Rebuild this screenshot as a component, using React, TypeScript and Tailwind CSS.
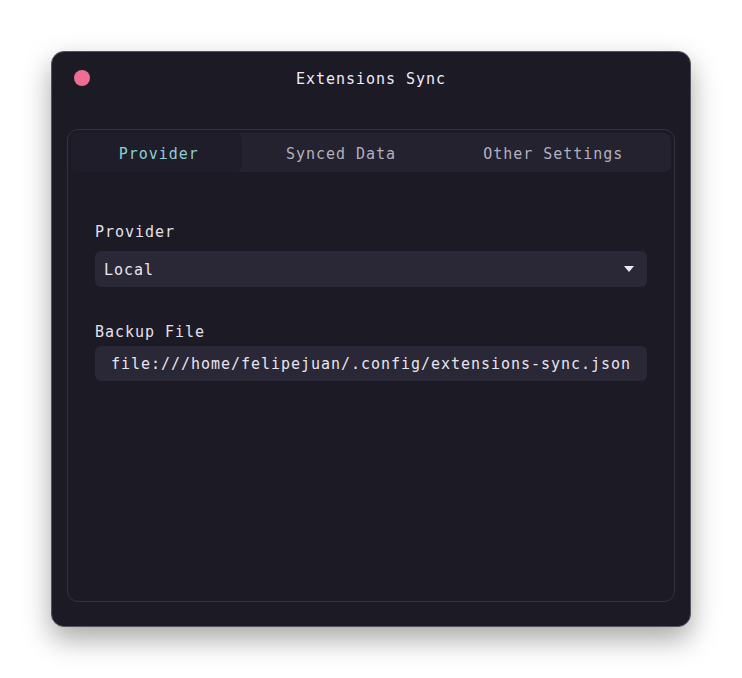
import { useState } from 'react';

const tabs = ['Provider', 'Synced Data', 'Other Settings'];

const mono = "font-['DejaVu_Sans_Mono','Liberation_Mono',monospace] text-[15px] tracking-[0.97px]";

const App = () => {
  const [active, setActive] = useState(0);

  return (
    <div className={`min-h-[678px] w-full bg-white p-[51px] ${mono}`}>
      <div className="flex h-[576px] w-[640px] flex-col rounded-[13px] border border-[#55535f] bg-[#1c1a25] shadow-[0_12px_28px_rgba(0,0,0,0.35)]">
        {/* title bar */}
        <div className="relative flex h-[54px] items-center justify-center">
          <span className="absolute left-[22px] top-[18px] h-4 w-4 rounded-full bg-[#ee6d92]" />
          <span className="text-[#efebf7]">Extensions Sync</span>
        </div>

        <div className="flex flex-1 px-[15px] pb-6 pt-[23px]">
          <div className="flex flex-1 flex-col rounded-[11px] border border-[#34323e] p-[3px]">
            <div className="flex h-[39px] rounded-[7px] bg-[#24222f] px-1">
              {tabs.map((t, i) => (
                <button
                  key={t}
                  onClick={() => setActive(i)}
                  className={`flex flex-auto items-center justify-center pt-[3px] ${
                    active === i ? '-ml-1 rounded-[7px] bg-[#1f1d2a] pl-1 text-[#8ccfd6]' : 'text-[#b3afbf]'
                  }`}
                >
                  {t}
                </button>
              ))}
            </div>

            <div className="flex flex-col px-[24px] pt-[50px]">
              <label className="leading-5 text-[#e4e0ec]">Provider</label>
              <div className="mt-[9px] flex h-9 items-center justify-between rounded-[6px] bg-[#2a2836] pl-[9px] pr-[13px] pt-[2px] text-[#e8e4f0]">
                <span>Local</span>
                <svg width="10" height="6" viewBox="0 0 10 6" className="-mt-[2px]">
                  <path d="M0 0h10L5 6z" fill="#ebe8f5" />
                </svg>
              </div>

              <label className="mt-[35px] leading-5 text-[#e4e0ec]">Backup File</label>
              <div className="mt-[4px] flex h-[35px] items-center justify-center rounded-[6px] bg-[#2a2836] pt-[2px] text-[#e8e4f0]">
                file:///home/felipejuan/.config/extensions-sync.json
              </div>
            </div>
          </div>
        </div>
      </div>
    </div>
  );
};

export default App;
